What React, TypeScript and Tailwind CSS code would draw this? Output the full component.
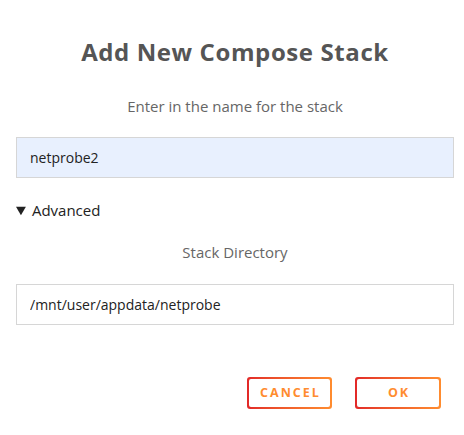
import * as React from "react";

const font = { fontFamily: '"Open Sans", "Noto Sans", sans-serif' };

function GradientButton({ label, width }: { label: string; width: string }) {
  return (
    <button
      type="button"
      className={`${width} h-8 rounded-[3px] bg-gradient-to-r from-[#e22828] to-[#ff8c2f] p-[2px]`}
    >
      <span className="flex h-full w-full items-center justify-center rounded-[2px] bg-white pl-[2px] text-[12.5px] font-bold uppercase tracking-[2px] text-[#ff8c2f]">
        {label}
      </span>
    </button>
  );
}

export default function App() {
  const [name, setName] = React.useState("netprobe2");
  const [dir, setDir] = React.useState("/mnt/user/appdata/netprobe");

  return (
    <div className="min-h-screen w-[464px] bg-white pl-4 pr-[10px] pt-[37px]" style={font}>
      <h1 className="text-center text-[24px] font-bold leading-[30px] tracking-[0.6px] text-[#555]">
        Add New Compose Stack
      </h1>
      <p className="mt-[29px] text-center text-[15px] leading-5 text-[#666]">
        Enter in the name for the stack
      </p>
      <input
        value={name}
        onChange={(e) => setName(e.target.value)}
        className="mt-[21px] block h-[41px] w-full border border-[#d6d6d6] bg-[#e8f0fe] px-[13px] text-[14px] text-[#222] outline-none"
      />
      <details open className="mt-[22px]">
        <summary className="cursor-pointer text-[15px] leading-5 text-[#222]">
          Advanced
        </summary>
        <p className="mt-[22px] text-center text-[15px] leading-5 text-[#666]">
          Stack Directory
        </p>
        <input
          value={dir}
          onChange={(e) => setDir(e.target.value)}
          className="mt-[22px] block h-[41px] w-full border border-[#d6d6d6] bg-white px-[13px] text-[14px] text-[#222] outline-none"
        />
      </details>
      <div className="mt-[52px] flex justify-end gap-[23px] pr-[13px]">
        <GradientButton label="Cancel" width="w-[85px]" />
        <GradientButton label="OK" width="w-[86px]" />
      </div>
    </div>
  );
}
